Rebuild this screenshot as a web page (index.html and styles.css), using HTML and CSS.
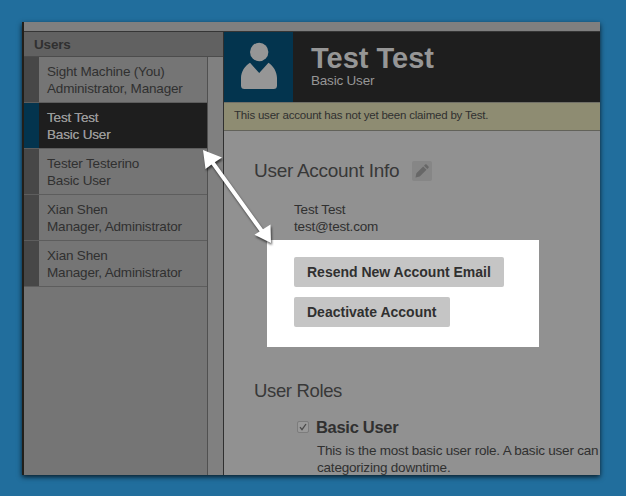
FILE: index.html
```html
<!DOCTYPE html>
<html lang="en">
<head>
<meta charset="utf-8">
<title>Users</title>
<link rel="stylesheet" href="styles.css">
</head>
<body>
<div class="window">
  <div class="topbar"></div>
  <div class="columns">
    <aside class="sidebar">
      <h2 class="sidebar-title">Users</h2>
      <div class="sidebar-body">
        <ul class="user-list">
          <li class="user">Sight Machine (You)<br>Administrator, Manager</li>
          <li class="user selected">Test Test<br>Basic User</li>
          <li class="user">Tester Testerino<br>Basic User</li>
          <li class="user">Xian Shen<br>Manager, Administrator</li>
          <li class="user">Xian Shen<br>Manager, Administrator</li>
        </ul>
      </div>
    </aside>
    <main class="detail">
      <header class="profile">
        <div class="avatar">
          <svg width="69" height="70" viewBox="0 0 69 70"><circle cx="35.2" cy="20" r="9.2"/><path d="M26 30.8 35.2 41 44.5 30.8C49 33.5 53 40 53 46V53.500Q53 57 49.500 57H20.500Q17 57 17 53.500V46C17 40 21 33.500 26 30.800Z"/></svg>
        </div>
        <div class="identity">
          <h1 class="name">Test Test</h1>
          <p class="role">Basic User</p>
        </div>
      </header>
      <p class="notice">This user account has not yet been claimed by Test.</p>
      <section class="account">
        <div class="heading-row">
          <h2 class="section-title title-account">User Account Info</h2>
          <span class="edit"><svg width="20" height="20" viewBox="0 0 20 20"><path d="M3.500 16.500 4.400 12.300 11.200 5.500 14.500 8.800 7.700 15.600ZM12 4.700 13.200 3.500Q13.900 2.900 14.600 3.500L16.500 5.400Q17.100 6.100 16.500 6.800L15.300 8Z"/></svg></span>
        </div>
        <p class="contact">Test Test<br>test@test.com</p>
        <div class="highlight">
          <button class="btn btn-resend">Resend New Account Email</button>
          <button class="btn btn-deactivate">Deactivate Account</button>
        </div>
      </section>
      <section class="roles">
        <h2 class="section-title">User Roles</h2>
        <div class="role-row">
          <span class="check"><svg width="12" height="12" viewBox="0 0 12 12"><rect x=".5" y=".5" width="11" height="11" rx="1.500"/><path d="M3 6.200 5 8.700 9 3"/></svg></span>
          <h3 class="role-name">Basic User</h3>
        </div>
        <p class="role-text">This is the most basic user role. A basic user can<br>categorizing downtime.</p>
      </section>
    </main>
  </div>
</div>
<svg class="arrow" width="90" height="110" viewBox="190 140 90 110"><path d="M203 150 222 157.500 214.800 162.200 263 229.200 270.500 224.500 271 243 254.500 234.800 259.600 231.500 211.500 164.600 205.500 169Z"/></svg>
</body>
</html>
```

FILE: styles.css
```css
* { box-sizing: border-box; }
body {
  margin: 0;
  width: 626px;
  height: 496px;
  padding: 22px 26px 21px 22px;
  overflow: hidden;
  background: #216e9d;
  font: 13.5px/17px "Liberation Sans", Arial, sans-serif;
  letter-spacing: -.18px;
  color: #303030;
}
h1, h2, h3, p, ul { margin: 0; padding: 0; font-weight: normal; }
.window {
  height: 453px;
  display: flex;
  flex-direction: column;
  border-left: 2px solid #211f1a;
  background: #919191;
  box-shadow: 0 2px 5px rgba(0, 0, 0, .75);
}
.topbar { height: 10px; flex: none; background: #7f7f7f; border-bottom: 1px solid #353535; }
.columns { display: grid; grid-template-columns: 200px 1fr; flex: 1; min-height: 0; }
.sidebar {
  display: flex;
  flex-direction: column;
  border-right: 1px solid #303030;
  background: #808080;
}
.sidebar-title {
  height: 25px;
  padding-left: 10px;
  border-bottom: 1px solid #4c4c4c;
  background: #616161;
  font-size: 13.5px;
  font-weight: bold;
  line-height: 25px;
}
.sidebar-body { flex: 1; width: 184px; border-right: 1px solid #505050; background: #757575; }
.user-list { list-style: none; }
.user {
  height: 46px;
  padding: 6px 0 0 23px;
  border-bottom: 1px solid #5d5d5d;
  box-shadow: inset 15px 0 #474747;
  white-space: nowrap;
}
.selected { background: #1e1e1e; box-shadow: inset 15px 0 #03344e; color: #999; text-shadow: 0 0 .5px #999; }
.detail { min-width: 0; overflow: hidden; background: #919191; white-space: nowrap; }
.profile { display: flex; height: 70px; background: #1e1e1e; color: #969696; }
.avatar { width: 69px; background: #03344e; fill: #969696; }
.avatar svg { display: block; }
.identity { padding: 10px 0 0 18px; }
.name { font-size: 29px; line-height: 32px; font-weight: bold; letter-spacing: 0; }
.role { line-height: 16px; margin-top: -1px; letter-spacing: -.2px; }
.notice {
  height: 29px;
  padding-left: 10px;
  border-top: 1px solid #717067;
  border-bottom: 1px solid #62625a;
  background: #8e8c72;
  font-size: 11.5px;
  line-height: 25px;
  letter-spacing: -.2px;
}
.account { padding: 29px 0 0 30px; }
.heading-row { display: flex; align-items: center; gap: 13px; height: 21px; }
.section-title { font-size: 18.5px; line-height: 21px; letter-spacing: -.35px; color: #383838; }
.title-account { width: 145px; font-size: 19px; letter-spacing: -.28px; }
.edit { width: 20px; height: 20px; border-radius: 2px; background: #868686; fill: #676767; }
.edit svg { display: block; }
.contact { margin: 20px 0 0 40px; }
.highlight {
  display: flex;
  flex-direction: column;
  align-items: flex-start;
  gap: 10px;
  width: 272px;
  height: 107px;
  margin: 5px 0 0 13px;
  padding: 17px 27px;
  background: #fff;
}
.btn {
  height: 30px;
  padding: 0 13px;
  border: 0;
  border-radius: 2px;
  background: #c5c5c5;
  color: #303030;
  font: bold 14px/30px "Liberation Sans", Arial, sans-serif;
  text-align: left;
  white-space: nowrap;
}
.btn-resend { width: 210px; }
.btn-deactivate { width: 156px; }
.roles { padding: 33px 0 0 30px; }
.role-row { display: flex; align-items: center; gap: 7px; height: 22px; margin: 15px 0 0 43px; }
.check svg { display: block; fill: #999; stroke: #7c7c7c; stroke-width: 1; }
.check path { fill: none; stroke: #4a4a4a; stroke-width: 1.3; }
.role-name { font-size: 16.5px; font-weight: bold; letter-spacing: -.3px; }
.role-text { margin: 4px 0 0 63px; letter-spacing: -.21px; }
.arrow { position: absolute; left: 190px; top: 140px; fill: #fff; filter: drop-shadow(1px 2px 1px rgba(0, 0, 0, .6)); }
```
